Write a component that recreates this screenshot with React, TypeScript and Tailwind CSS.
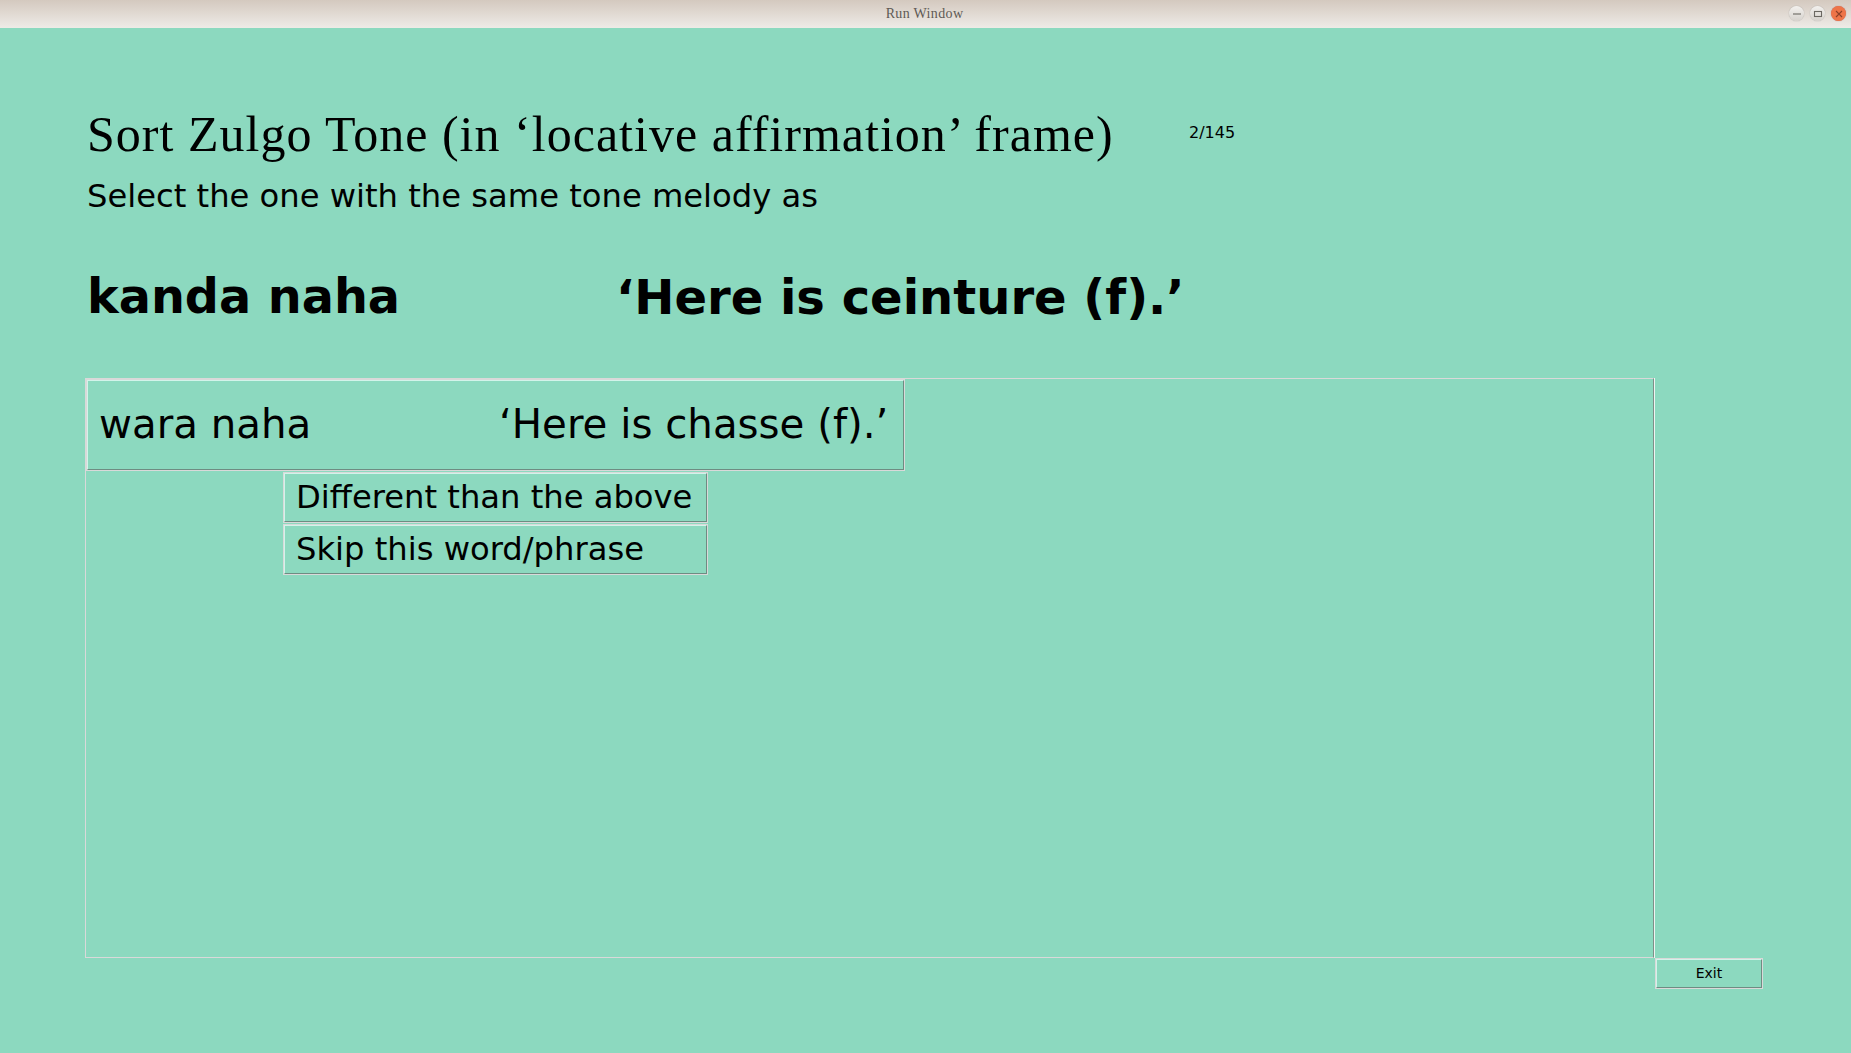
const WindowButton = ({ kind }: { kind: string }) => {
    const close = kind === 'close';
    return (
        <div
            className={
                close
                    ? 'w-[15px] h-[15px] rounded-full flex items-center justify-center bg-[#ee7448] shadow-[0_0_1px_#a66]'
                    : 'w-[15px] h-[15px] rounded-full flex items-center justify-center bg-gradient-to-b from-[#f3f1ee] to-[#d6d2cd] shadow-[0_0_1px_#888]'
            }
        >
            <svg width="10" height="10" viewBox="0 0 10 10" fill="none" stroke={close ? '#8c3f28' : '#6b6862'} strokeWidth="1.1">
                {kind === 'min' && <path d="M1 5h8" />}
                {kind === 'max' && <rect x="1.5" y="2.5" width="7" height="5" />}
                {close && <path d="M2 2l6 6M8 2l-6 6" />}
            </svg>
        </div>
    );
};

const TkButton = ({ className, children }: { className: string; children: React.ReactNode }) => (
    <div className={'border border-[#d9d9d9] ' + className}>
        <div className="h-full border border-t-[#d3f3ea] border-l-[#d3f3ea] border-b-[#6e8c82] border-r-[#6e8c82]">{children}</div>
    </div>
);

const App = () => {
    return (
        <div className="w-[1851px] h-[1053px] overflow-hidden bg-[#8cd9bf] text-black font-['DejaVu_Sans',sans-serif]">
            <div className="relative h-[28px] bg-gradient-to-b from-[#d4c9bf] to-[#eeebe7] flex items-center justify-center">
                <span className="-ml-[2px] -mt-[2px] text-[14px] tracking-[0.35px] text-[#5e5a55] font-['Liberation_Serif',serif]">Run Window</span>
                <div className="absolute right-[5px] top-[6px] flex gap-[6px]">
                    <WindowButton kind="min" />
                    <WindowButton kind="max" />
                    <WindowButton kind="close" />
                </div>
            </div>

            <div className="pl-[85px]">
                <div className="flex items-center pl-[2px] pt-[77px]">
                    <h1 className="w-[1102px] shrink-0 text-[50px] tracking-[1.02px] leading-[58px] font-normal font-['Liberation_Serif',serif]">
                        Sort Zulgo Tone (in ‘locative affirmation’ frame)
                    </h1>
                    <span className="text-[16px] -mt-[3px]">2/145</span>
                </div>
                <p className="pl-[2px] mt-[12px] text-[32.2px] leading-[42px]">Select the one with the same tone melody as</p>

                <div className="flex pl-[2px] mt-[51px] leading-[58px] font-bold">
                    <span className="w-[529px] shrink-0 text-[47.7px]">kanda naha</span>
                    <span className="text-[48px]">‘Here is ceinture (f).’</span>
                </div>

                <div className="grid grid-cols-[1569px_auto] mt-[52px]">
                    <div className="h-[580px] border border-[#d9d9d9] border-r-[#7f8f88] shadow-[1px_0_0_#eef4f1]">
                        <TkButton className="w-[819px] h-[92px]">
                            <div className="h-full flex items-center pl-[11px] text-[40.3px]">
                                <span className="w-[400px] shrink-0">wara naha</span>
                                <span>‘Here is chasse (f).’</span>
                            </div>
                        </TkButton>
                        <div className="ml-[197px] mt-[1px] flex flex-col gap-[1px] w-[425px]">
                            <TkButton className="h-[51px]">
                                <div className="h-full flex items-center pl-[11px] text-[32.2px]">Different than the above</div>
                            </TkButton>
                            <TkButton className="h-[51px]">
                                <div className="h-full flex items-center pl-[11px] text-[32.2px]">Skip this word/phrase</div>
                            </TkButton>
                        </div>
                    </div>
                    <div />
                    <div />
                    <TkButton className="w-[108px] h-[31px] ml-[1px]">
                        <div className="h-full flex items-center justify-center text-[14px]">Exit</div>
                    </TkButton>
                </div>
            </div>
        </div>
    );
};

export default App;
